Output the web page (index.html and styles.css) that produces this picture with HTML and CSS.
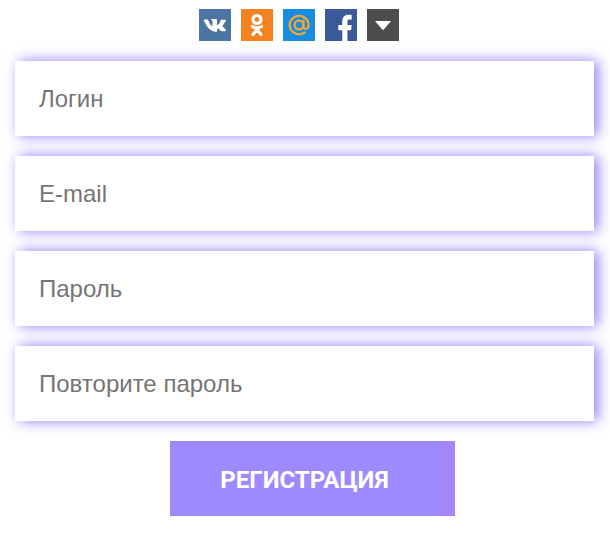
FILE: index.html
```html
<!DOCTYPE html>
<html lang="ru">

<head>
    <meta charset="UTF-8">
    <meta name="viewport" content="width=device-width, initial-scale=1.0">
    <title>Регистрация</title>
    <link rel="stylesheet" href="styles.css">
</head>

<body>
    <form class="register">
        <div class="socials">
            <a class="social vk" href="#" aria-label="VK">
                <svg viewBox="0 0 32 32">
                    <path transform="translate(.7 .6)" d="M15.4 22.2h1.3s.6-.1.7-.5c.2-.3.1-1 .1-1s0-1.6.8-1.8c.8-.3 1.7 1.5 2.8 2.3.8.6 1.4.4 1.4.4h2.8s1.5-.1.8-1.3c-.1-.1-.4-.8-2.1-2.4-1.8-1.7-1.5-1.4.6-4.3 1.3-1.7 1.8-2.8 1.6-3.2-.1-.4-1.1-.3-1.1-.3h-3.2s-.3 0-.5.1c-.2.1-.3.4-.3.4s-.5 1.4-1.2 2.5c-1.4 2.4-2 2.5-2.2 2.4-.6-.4-.4-1.5-.4-2.2 0-2.5.4-3.5-.7-3.7-.4-.1-.7-.2-1.7-.2-1.3 0-2.4 0-3 .3-.4.2-.7.7-.5.7.3 0 .8.2 1.1.5.4.5.4 1.7.4 1.7s.2 3.1-.5 3.5c-.5.3-1.2-.3-2.6-2.8-.7-1.2-1.2-2.6-1.2-2.6s-.1-.3-.3-.4c-.3-.2-.6-.3-.6-.3h-3s-.4 0-.6.2c-.1.2 0 .5 0 .5s2.4 5.500 5.100 8.300c2.400 2.600 5.200 3.200 6.200 3.200z" />
                </svg>
            </a>
            <a class="social ok" href="#" aria-label="OK">
                <svg viewBox="0 0 32 32">
                    <circle cx="16" cy="10.5" r="4" />
                    <path d="M11.5 17.5q4.500 3 9 0M16 20.5l-4 5M16 20.5l4 5" />
                </svg>
            </a>
            <a class="social mail" href="#" aria-label="Mail">
                <svg viewBox="0 0 32 32">
                    <circle cx="16" cy="16" r="4.4" />
                    <path d="M20.500 11.700V17.500c0 3.400 5.100 3.100 5.100-1.500A9.500 9.200 0 1 0 21.800 23.400" />
                </svg>
            </a>
            <a class="social fb" href="#" aria-label="Facebook">
                <svg viewBox="0 0 32 32">
                    <path d="M17.3 32V21.200h-4V16h4v-3.700c0-4.200 2.400-6.500 6-6.500 1.700 0 3 .1 3.400.2v4.500h-2.300c-1.700 0-2 .8-2 2.200V16h4.300l-.6 5.200h-3.700V32z" />
                </svg>
            </a>
            <a class="social more" href="#" aria-label="Ещё">
                <svg viewBox="0 0 32 32">
                    <path d="M8 12h16l-7 8.2q-1 1-2 0z" />
                </svg>
            </a>
        </div>

        <input class="field" type="text" placeholder="Логин">
        <input class="field" type="email" placeholder="E-mail">
        <input class="field" type="password" placeholder="Пароль">
        <input class="field" type="password" placeholder="Повторите пароль">

        <button class="submit" type="submit">РЕГИСТРАЦИЯ</button>
    </form>
</body>

</html>
```

FILE: styles.css
```css
body {
    margin: 0;
    background-color: #fff;
    font-family: "Liberation Sans", Arial, sans-serif;
    overflow: hidden;
}

.register {
    display: flex;
    flex-direction: column;
    gap: 20px;
    padding: 9px 16px 0 15px;
}

.socials {
    display: flex;
    gap: 10px;
    margin-left: 184px;
}

.social {
    width: 32px;
    height: 32px;
}

.social svg {
    display: block;
    fill: #fff;
}

.vk {
    background-color: #4d75a3;
}

.ok {
    background-color: #f58220;
}

.ok svg {
    fill: none;
    stroke: #fff;
    stroke-width: 3.2;
    stroke-linecap: round;
}

.mail {
    background-color: #168de2;
}

.mail svg {
    fill: none;
    stroke: #faa72c;
    stroke-width: 2.2;
    stroke-linecap: round;
}

.fb {
    background-color: #3b5998;
}

.more {
    background-color: #4d4d4d;
}

.field {
    box-sizing: border-box;
    width: 100%;
    height: 75px;
    padding: 0 24px;
    border: none;
    border-radius: 0;
    background-color: #fff;
    box-shadow: 4px 0 13px #8f7fff;
    font-family: inherit;
    font-size: 24px;
    outline: none;
}

.field::placeholder {
    color: #757575;
}

.submit {
    width: 285px;
    height: 75px;
    margin-left: 155px;
    padding: 2px 16px 0 0;
    border: none;
    background: linear-gradient(to right, #9e8aff 269px, #a586f9 269px);
    color: #fff;
    font-family: Roboto, sans-serif;
    font-size: 24px;
    font-weight: 700;
    cursor: pointer;
}
```
